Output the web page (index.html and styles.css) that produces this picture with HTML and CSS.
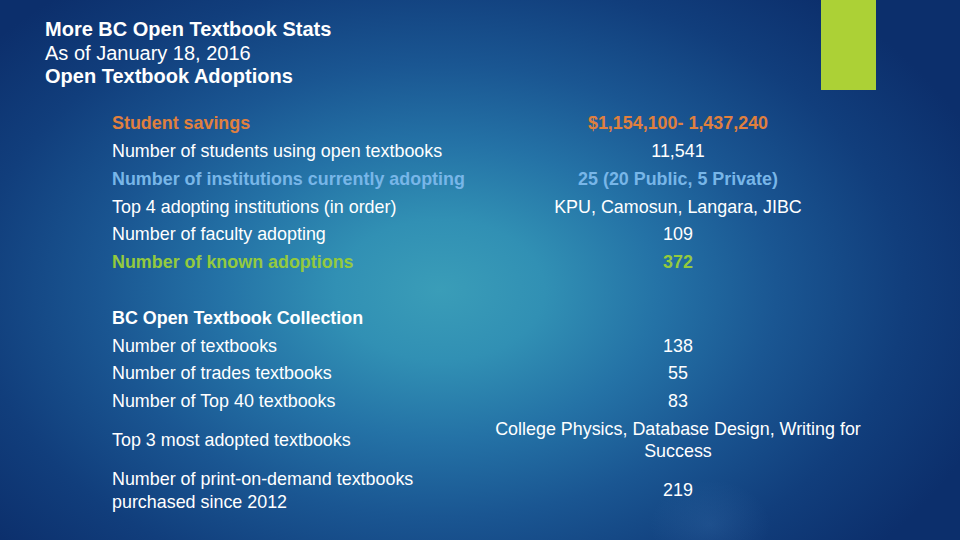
FILE: index.html
```html
<!DOCTYPE html>
<html lang="en">
<head>
<meta charset="utf-8">
<title>More BC Open Textbook Stats</title>
<link rel="stylesheet" href="styles.css">
</head>
<body>
<div class="slide">
  <div class="accent"></div>
  <header class="title">
    <div class="t-bold">More BC Open Textbook Stats</div>
    <div>As of January 18, 2016</div>
    <div class="t-bold">Open Textbook Adoptions</div>
  </header>
  <div class="stats">
    <div class="cell orange b">Student savings</div>
    <div class="cell val orange b">$1,154,100- 1,437,240</div>

    <div class="cell">Number of students using open textbooks</div>
    <div class="cell val">11,541</div>

    <div class="cell blue b">Number of institutions currently adopting</div>
    <div class="cell val blue b">25 (20 Public, 5 Private)</div>

    <div class="cell">Top 4 adopting institutions (in order)</div>
    <div class="cell val">KPU, Camosun, Langara, JIBC</div>

    <div class="cell">Number of faculty adopting</div>
    <div class="cell val">109</div>

    <div class="cell green b">Number of known adoptions</div>
    <div class="cell val green b">372</div>

    <div class="spacer"></div>

    <div class="cell b">BC Open Textbook Collection</div>
    <div class="cell val"></div>

    <div class="cell">Number of textbooks</div>
    <div class="cell val">138</div>

    <div class="cell">Number of trades textbooks</div>
    <div class="cell val">55</div>

    <div class="cell">Number of Top 40 textbooks</div>
    <div class="cell val">83</div>

    <div class="cell">Top 3 most adopted textbooks</div>
    <div class="cell val">College Physics, Database Design, Writing for<br>Success</div>

    <div class="cell">Number of print-on-demand textbooks<br>purchased since 2012</div>
    <div class="cell val">219</div>
  </div>
</div>
</body>
</html>
```

FILE: styles.css
```css
* { box-sizing: border-box; }
html, body { margin: 0; padding: 0; }
body {
  width: 960px;
  height: 540px;
  overflow: hidden;
  font-family: "Liberation Sans", Arial, sans-serif;
  color: #ffffff;
}
.slide {
  position: relative;
  width: 960px;
  height: 540px;
  padding-top: 18px;
  background:
    radial-gradient(ellipse 60px 45px at 710px 525px, rgba(80,140,200,0.18), rgba(80,140,200,0) 100%),
    radial-gradient(ellipse 580px 390px at 440px 290px, #3a9db8 0%, #3190b4 18%, #2472a6 38%, #1a5692 58%, #113e7c 80%, #0c2f6c 100%);
  background-color: #0c2f6c;
}
.accent {
  position: absolute;
  left: 821px;
  top: 0;
  width: 55px;
  height: 90px;
  background: #acd136;
}
.title {
  margin-left: 45px;
  font-size: 20px;
  line-height: 23.5px;
}
.t-bold { font-weight: bold; }
.stats {
  margin-left: 112px;
  margin-top: 21px;
  width: 754px;
  display: grid;
  grid-template-columns: 378px 376px;
  font-size: 17.9px;
  line-height: 22.4px;
}
.cell {
  padding: 2.7px 0;
  display: flex;
  align-items: center;
  min-height: 27.8px;
}
.val {
  justify-content: center;
  text-align: center;
}
.spacer {
  grid-column: 1 / span 2;
  height: 27.8px;
}
.b { font-weight: bold; }
.orange { color: #e0803e; }
.blue { color: #78b6e8; }
.green { color: #94ca3e; }
```
